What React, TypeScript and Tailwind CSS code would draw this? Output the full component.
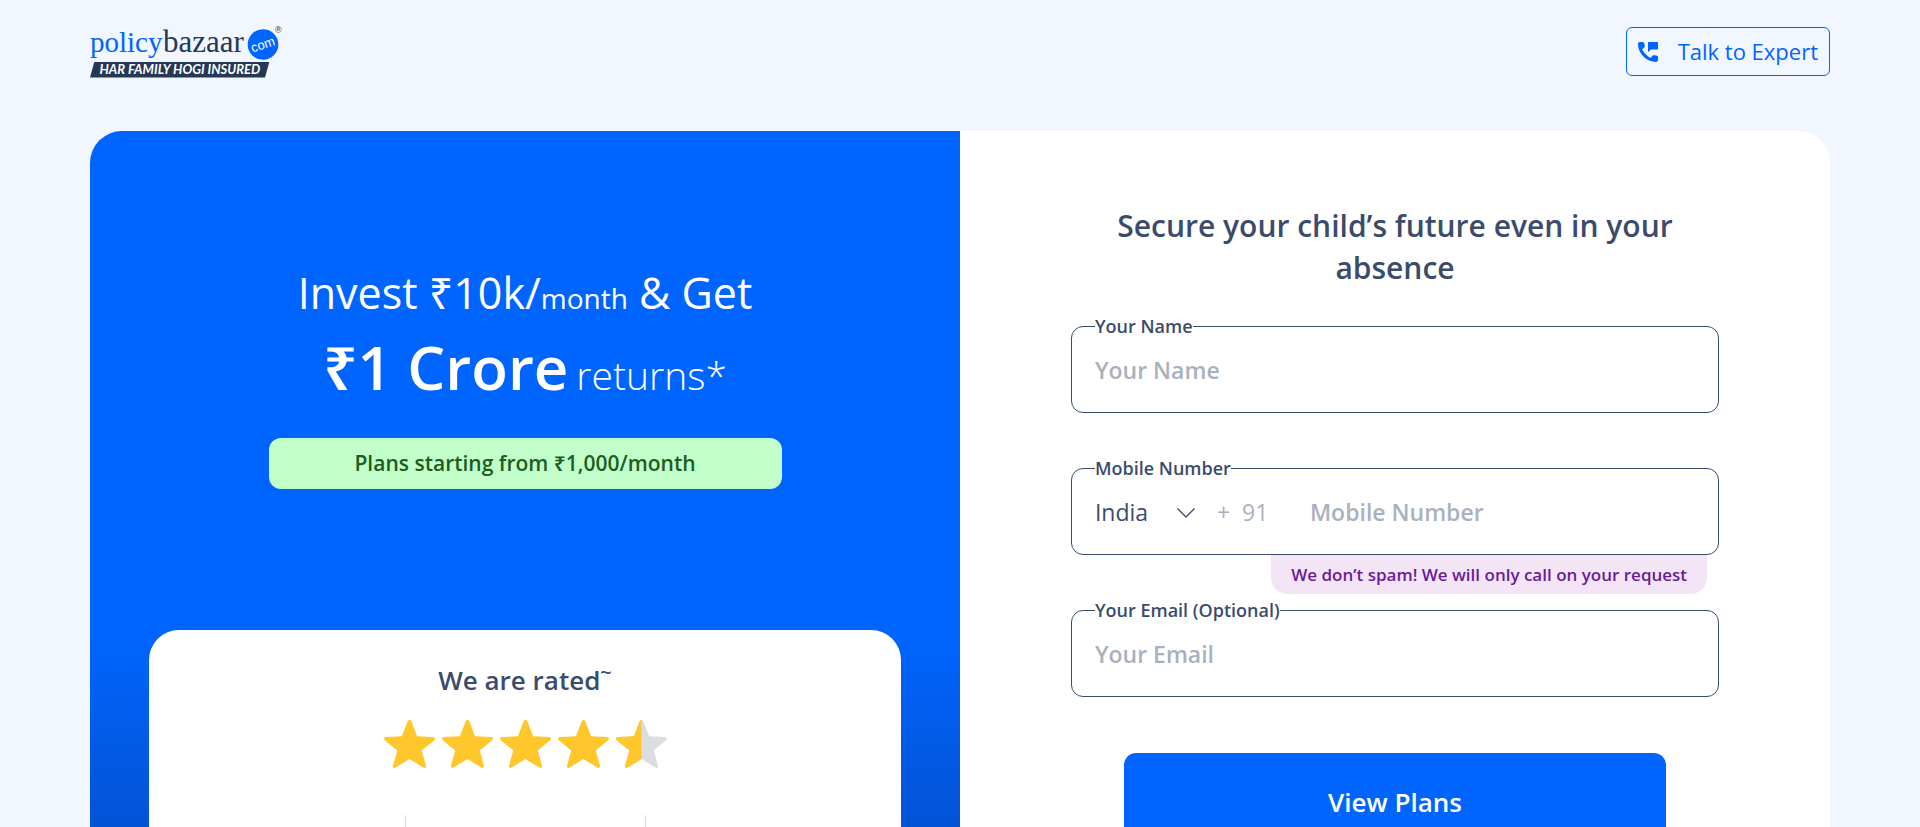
import type { ReactNode } from "react";

function Logo() {
  return (
    <svg viewBox="0 -7 196 60" className="h-[60px] w-[196px]" role="img" aria-label="policybazaar.com">
      <g fontFamily="'Liberation Serif', serif">
        <text x="0" y="25" fill="#0065ff" fontSize="29">policy</text>
        <text x="73" y="25" fill="#253858" fontSize="31">bazaar</text>
      </g>
      <circle cx="173" cy="17.500" r="15.300" fill="#0065ff" />
      <text
        x="173"
        y="22"
        fill="#fff"
        fontFamily="'Liberation Sans', sans-serif"
        fontSize="13"
        textAnchor="middle"
        transform="rotate(-18 173 18)"
      >
        com
      </text>
      <text x="185" y="6" fill="#253858" fontFamily="'Liberation Sans', sans-serif" fontSize="9">®</text>
      <path d="M4.300 35h175l-4.300 15.500H0z" fill="#253858" />
      <text
        x="9.500"
        y="47"
        fill="#fff"
        fontFamily="Lato, sans-serif"
        fontSize="13"
        fontWeight="700"
        fontStyle="italic"
      >
        HAR FAMILY HOGI INSURED
      </text>
    </svg>
  );
}

function PhoneMessageIcon() {
  return (
    <svg viewBox="0 0 20 20" className="size-5" fill="#0065ff" aria-hidden="true">
      <path d="M2 0h2.600c1.100 0 1.700.8 1.800 1.800l.3 2.200c.1 1-.3 1.700-1.100 2.200l-1.500 1c1.600 3.600 5 7 8.700 8.700l1-1.500c.5-.8 1.200-1.200 2.200-1.100l2.200.3c1 .1 1.800.8 1.800 1.800V18c0 1.100-.9 2-2 2C8.500 20 0 11.500 0 2 0 .9.900 0 2 0z" />
      <path d="M10.800 0h8.400c.5 0 .8.300.8.800v5.900c0 .5-.3.800-.8.800h-6.400L10 10.300V.8c0-.5.3-.8.8-.8z" />
    </svg>
  );
}

const STAR =
  "M25.500 0c1 0 1.600.6 2 1.500l5.600 14.800 15.900.7c1.900.1 2.600 2 1.200 3.200L37.800 30.400l4.200 15.300c.5 1.800-1.100 2.900-2.600 1.900L25.500 39.100l-13.900 8.500c-1.500 1-3.100-.1-2.600-1.900l4.200-15.300L.8 20.200C-.6 19 .1 17.100 2 17l15.900-.7L23.500 1.500c.4-.9 1-1.500 2-1.500z";

function Star({ half = false }: { half?: boolean }) {
  return (
    <svg viewBox="0 0 51 48" className="h-12 w-[51px]" aria-hidden="true">
      <path d={STAR} fill={half ? "#dcdde1" : "#ffc72c"} />
      {half && (
        <>
          <clipPath id="star-left">
            <rect width="25.500" height="48" />
          </clipPath>
          <path d={STAR} fill="#ffc72c" clipPath="url(#star-left)" />
        </>
      )}
    </svg>
  );
}

function Field({ id, label, children }: { id: string; label: string; children: ReactNode }) {
  return (
    <fieldset className="min-w-0 rounded-xl border border-[#3b4c6b] px-[23px]">
      <legend className="text-[18px] leading-6 font-semibold text-[#3b4c6b]">
        <label htmlFor={id}>{label}</label>
      </legend>
      <div className="flex h-[74px] items-start">{children}</div>
    </fieldset>
  );
}

const INPUT =
  "h-16 w-full min-w-0 bg-transparent text-[23px] font-semibold text-[#253858] outline-none placeholder:text-[#a9b1be]";

function Hero() {
  return (
    <section className="flex flex-col items-center bg-linear-to-b from-[#0065ff] from-[500px] to-[#0350cc] to-[740px] px-[59px] text-white">
      <h1 className="mt-[132px] text-center">
        <span className="block text-[43px] leading-[60px]">
          Invest ₹10k/<span className="text-[28px] leading-none">month</span> &amp; Get
        </span>
        <span className="mt-[6px] block text-[60px] leading-[76px] font-semibold">
          ₹1 Crore<span className="ml-2 text-[39px] leading-none font-light">returns*</span>
        </span>
      </h1>
      <p className="mt-[33px] w-full max-w-[513px] rounded-xl bg-[#c2ffcb] text-center text-[21px] leading-[51px] font-semibold text-[#1b5e20]">
        Plans starting from ₹1,000/month
      </p>
      <div className="mt-[141px] flex w-full grow flex-col items-center rounded-t-[30px] bg-white text-[#3b4c6b]">
        <h2 className="mt-8 text-[26px] leading-9 font-semibold">
          We are rated<sup className="text-[20px] leading-none">~</sup>
        </h2>
        <div className="mt-[22px] flex gap-[7px]" role="img" aria-label="4.5 stars">
          <Star />
          <Star />
          <Star />
          <Star />
          <Star half />
        </div>
        <div className="mt-[47px] w-[241px] grow border-x border-[#dcdde1]" />
      </div>
    </section>
  );
}

function LeadForm() {
  return (
    <section className="bg-white">
      <form className="mx-auto flex w-[74.5%] flex-col" onSubmit={(e) => e.preventDefault()}>
        <h2 className="mt-[74px] text-center text-[30px] leading-[42px] font-semibold text-[#3b4c6b]">
          Secure your child’s future even in your absence
        </h2>
        <div className="mt-[25px] flex flex-col gap-[43px]">
          <Field id="name" label="Your Name">
            <input id="name" type="text" placeholder="Your Name" className={INPUT} />
          </Field>
          <div className="relative">
            <Field id="mobile" label="Mobile Number">
              <div className="relative h-16 w-[100px] shrink-0">
                <select
                  aria-label="Country"
                  className="h-16 w-full appearance-none bg-transparent text-[23px] text-[#3b4c6b] outline-none"
                >
                  <option>India</option>
                </select>
                <svg
                  viewBox="0 0 18 10"
                  className="pointer-events-none absolute top-7 right-0 h-[10px] w-[18px]"
                  fill="none"
                  stroke="#3b4c6b"
                  strokeWidth="1.300"
                  aria-hidden="true"
                >
                  <path d="M.5.5 9 9 17.500.5" />
                </svg>
              </div>
              <span className="ml-[22px] w-[93px] shrink-0 text-[23px] leading-[64px] text-[#a9b1be]">+ &nbsp;91</span>
              <input id="mobile" type="tel" placeholder="Mobile Number" className={INPUT} />
            </Field>
            <p className="absolute top-full right-3 rounded-b-2xl bg-[#f3e5f5] px-5 text-[17px] leading-[39px] font-semibold text-[#6a1b9a]">
              We don’t spam! We will only call on your request
            </p>
          </div>
          <Field id="email" label="Your Email (Optional)">
            <input id="email" type="email" placeholder="Your Email" className={INPUT} />
          </Field>
        </div>
        <button
          type="submit"
          className="mx-[53px] mt-[56px] h-[98px] rounded-xl bg-[#0065ff] text-[26px] font-semibold text-white"
        >
          View Plans
        </button>
      </form>
    </section>
  );
}

export default function App() {
  return (
    <div className="flex min-h-screen flex-col bg-[#f1f6ff] px-[90px] font-['Open_Sans','Noto_Sans',sans-serif]">
      <header className="flex h-[131px] items-start justify-between pt-5">
        <a href="#home">
          <Logo />
        </a>
        <button
          type="button"
          className="mt-[7px] flex h-[49px] items-center gap-5 rounded-md border border-[#0065ff] px-[11px] text-[22px] text-[#0065ff]"
        >
          <PhoneMessageIcon />
          Talk to Expert
        </button>
      </header>
      <main className="grid grow grid-cols-2 overflow-hidden rounded-t-[32px]">
        <Hero />
        <LeadForm />
      </main>
    </div>
  );
}
